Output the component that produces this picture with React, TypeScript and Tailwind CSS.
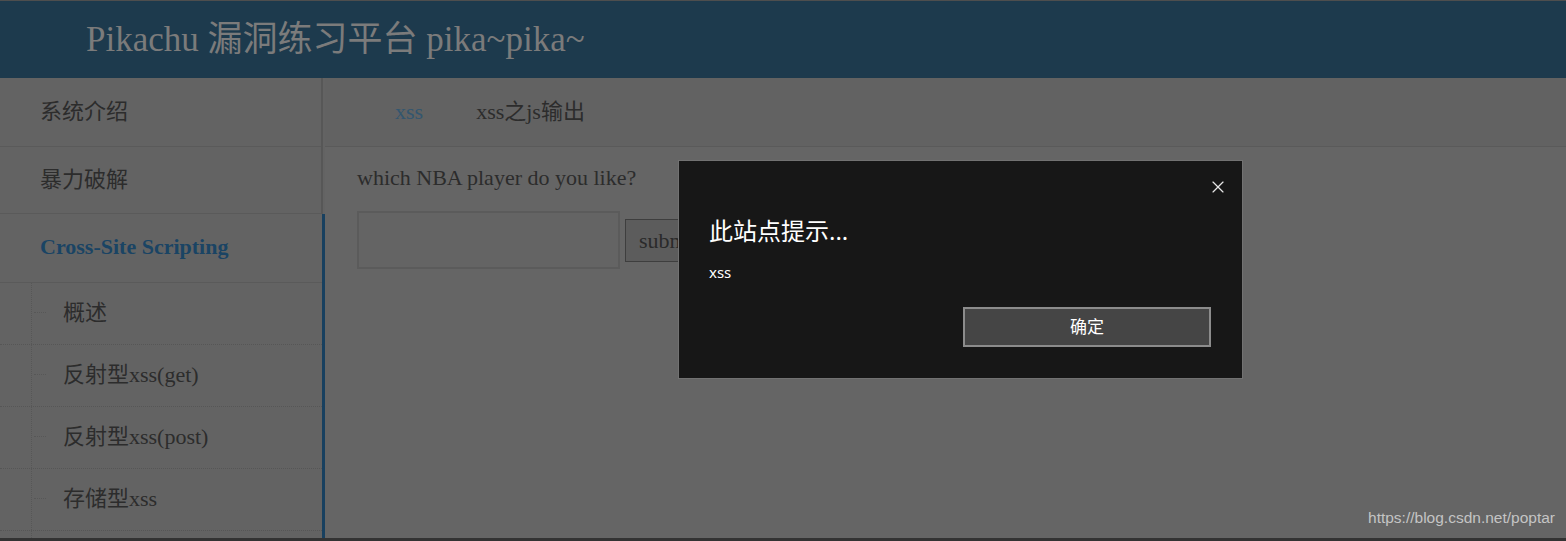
import { X } from 'lucide-react';

const serif = "font-['Liberation_Serif','Noto_Sans_CJK_SC',serif]";

const subItems = ['概述', '反射型xss(get)', '反射型xss(post)', '存储型xss', ''];

export default function App() {
  return (
    <div className={`relative w-[1566px] h-[541px] overflow-hidden flex flex-col bg-[#656565] border-t border-[#4e4e4e] border-b-[3px] border-b-[#333333] ${serif}`}>
      {/* Header */}
      <div className="h-[77px] shrink-0 bg-[#1d3a4d] flex items-center pl-[86px]">
        <span className="text-[35px] text-[#7b7b7b] leading-none">Pikachu 漏洞练习平台 pika~pika~</span>
      </div>

      <div className="flex flex-1 min-h-0">
        {/* Sidebar */}
        <div className="w-[325px] shrink-0 flex flex-col bg-[#636363]">
          <div className="w-[323px] border-r-2 border-[#575757]">
            <div className="h-[69px] pb-[2px] border-b border-[#5a5a5a] flex items-center pl-[40px] text-[22px] text-[#2c2c2c]">系统介绍</div>
            <div className="h-[67px] pb-[2px] border-b border-[#5a5a5a] flex items-center pl-[40px] text-[22px] text-[#2c2c2c]">暴力破解</div>
          </div>
          <div className="flex-1 w-[325px] border-r-[3px] border-[#18405f]">
            <div className="h-[69px] pb-[3px] border-b border-[#5a5a5a] flex items-center pl-[40px] text-[22px] font-bold text-[#1a4464]">
              Cross-Site Scripting
            </div>
            {subItems.map((item, i) => (
              <div key={i} className="h-[62px] border-b border-dotted border-[#565656] flex">
                <div className="ml-[31px] border-l border-dotted border-[#575757] flex items-center flex-1 pb-[2px]">
                  <span className="ml-[2px] w-[12px] border-t border-dotted border-[#575757]"></span>
                  <span className="ml-[17px] text-[22px] text-[#2c2c2c]">{item}</span>
                </div>
              </div>
            ))}
          </div>
        </div>

        {/* Main */}
        <div className="flex-1 flex flex-col">
          <div className="h-[69px] shrink-0 pb-[2px] border-b border-[#5a5a5a] bg-[#626262] flex items-center text-[22px]">
            <span className="ml-[70px] text-[#33566f]">xss</span>
            <span className="ml-[53px] text-[#2c2c2c]">xss之js输出</span>
          </div>
          <div className="pl-[32px] pt-[17px]">
            <p className="text-[22px] leading-[28px] text-[#2c2c2c]">which NBA player do you like?</p>
            <div className="flex items-center mt-[19px]">
              <div className="w-[263px] h-[58px] border-2 border-[#5b5b5b] bg-[#646464]"></div>
              <div className="ml-[5px] h-[43px] px-[13px] border border-[#3e3e3e] bg-[#5c5c5c] flex items-center text-[22px] text-[#2a2a2a]">submit</div>
            </div>
          </div>
        </div>
      </div>

      {/* Alert dialog */}
      <div className="absolute left-[678px] top-[159px] w-[565px] h-[219px] bg-[#171717] border border-[#727272] font-['Noto_Sans','Noto_Sans_CJK_SC',sans-serif] flex flex-col pl-[30px] pr-[31px]">
        <X className="absolute left-[529px] top-[16px] text-[#e6e6e6]" size={20} strokeWidth={1.4} />
        <div className="mt-[54px] text-[24px] leading-[32px] text-white">此站点提示...</div>
        <div className="mt-[15px] text-[15px] leading-[20px] text-white">xss</div>
        <div className="mt-[25px] self-end w-[248px] h-[40px] bg-[#454545] border-2 border-[#8c8c8c] flex items-center justify-center text-[17px] text-white">
          确定
        </div>
      </div>

      {/* Watermark */}
      <div className="absolute right-[11px] bottom-[9px] text-[15.5px] text-[#c4c4c4] font-['Liberation_Sans',sans-serif]">
        https://blog.csdn.net/poptar
      </div>
    </div>
  );
}
